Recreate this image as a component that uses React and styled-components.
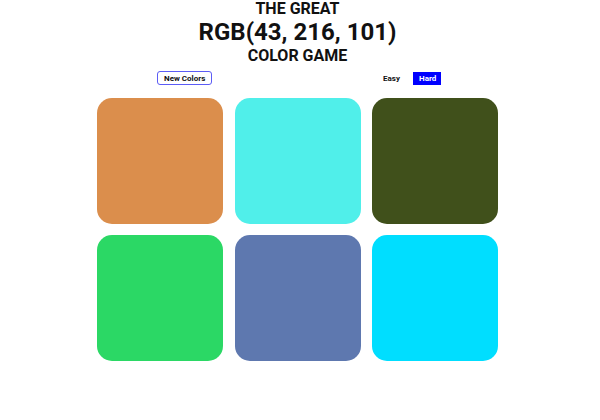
import styled, { createGlobalStyle } from 'styled-components';

const GlobalStyle = createGlobalStyle`
  body {
    margin: 0;
    background: #ffffff;
    font-family: Roboto, "Liberation Sans", sans-serif;
  }
`;

const Page = styled.div`
  width: 595px;
  display: flex;
  flex-direction: column;
  align-items: center;
`;

const Header = styled.header`
  text-align: center;
  color: #111;
  font-weight: 700;
`;

const Line = styled.div`
  font-size: ${(p) => (p.big ? '24px' : '16px')};
  line-height: ${(p) => (p.big ? '30px' : '17px')};
`;

const Controls = styled.div`
  width: 401px;
  box-sizing: border-box;
  padding: 0 57px 0 60px;
  margin-top: 7px;
  display: flex;
  justify-content: space-between;
  align-items: center;
`;

const Button = styled.button`
  font-family: Roboto, "Liberation Sans", sans-serif;
  font-size: 8px;
  font-weight: 700;
  padding: 0 6px;
  width: ${(p) => (p.active ? '28px' : 'auto')};
  height: ${(p) => (p.outlined ? '14px' : '13px')};
  border-radius: ${(p) => (p.outlined ? '3px' : '0')};
  border: ${(p) => (p.outlined ? '1px solid #5c5cf5' : 'none')};
  background: ${(p) => (p.active ? '#0000ff' : '#fff')};
  color: ${(p) => (p.active ? '#fff' : '#111')};
  cursor: pointer;
`;

const Modes = styled.div`
  display: flex;
  gap: 7px;
  align-items: center;
`;

const Grid = styled.div`
  margin-top: 13px;
  display: grid;
  grid-template-columns: repeat(3, 126px);
  gap: 11px 11.5px;
`;

const Square = styled.div`
  height: 126px;
  border-radius: 15px;
  background: ${(p) => p.color};
`;

const colors = [
  'rgb(219, 142, 76)',
  'rgb(80, 239, 234)',
  'rgb(64, 80, 27)',
  'rgb(43, 216, 101)',
  'rgb(94, 120, 175)',
  'rgb(0, 222, 255)',
];

function App() {
  return (
    <Page>
      <GlobalStyle />
      <Header>
        <Line>THE GREAT</Line>
        <Line big>RGB(43, 216, 101)</Line>
        <Line>COLOR GAME</Line>
      </Header>
      <Controls>
        <Button outlined>New Colors</Button>
        <Modes>
          <Button>Easy</Button>
          <Button active>Hard</Button>
        </Modes>
      </Controls>
      <Grid>
        {colors.map((c) => (
          <Square key={c} color={c} />
        ))}
      </Grid>
    </Page>
  );
}

export default App;
